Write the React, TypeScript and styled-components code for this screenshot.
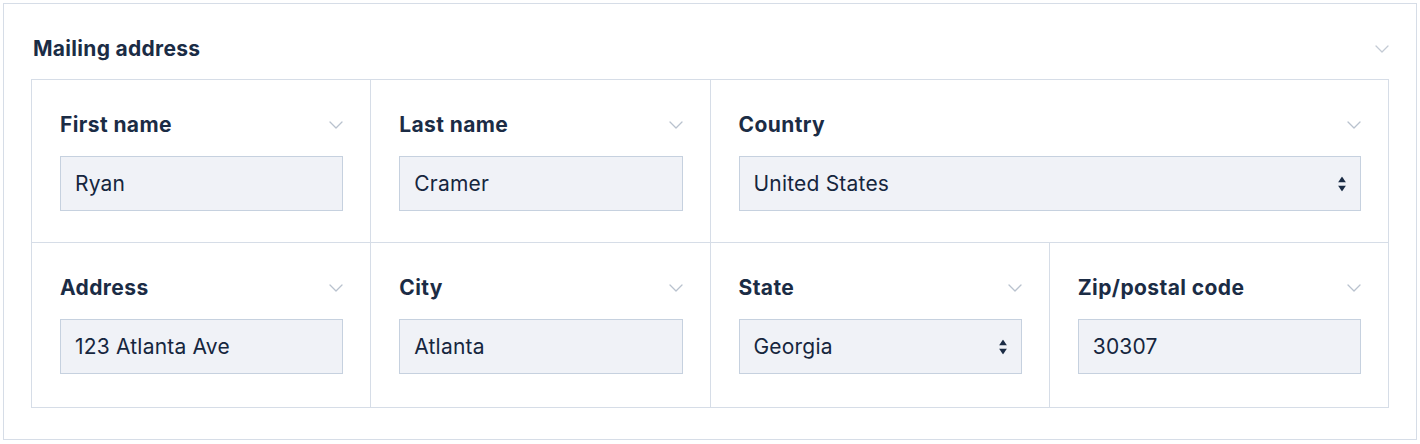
import React from "react";
import styled, { createGlobalStyle } from "styled-components";

const Global = createGlobalStyle`
  html, body { margin: 0; padding: 0; background: #ffffff; }
  body { font-family: Inter, "Noto Sans", sans-serif; -webkit-font-smoothing: antialiased; }
  * { box-sizing: border-box; }
`;

const Page = styled.div`
  padding: 3px 3px 0 3px;
  width: 1420px;
`;

const Panel = styled.section`
  border: 1px solid #d6dde7;
  padding: 33px 27px 31px 27px;
`;

const Header = styled.div`
  display: flex;
  align-items: center;
  justify-content: space-between;
  margin-bottom: 18px;
`;

const Title = styled.h2`
  margin: 0 0 0 2px;
  font-size: 21px;
  line-height: 24px;
  font-weight: 700;
  color: #1b2c45;
  letter-spacing: 0.3px;
`;

const Grid = styled.div`
  display: grid;
  grid-template-columns: repeat(4, 1fr);
  gap: 1px;
  background: #d6dde7;
  border: 1px solid #d6dde7;
`;

const Cell = styled.div<{ $span?: number; $last?: boolean }>`
  grid-column: span ${(p) => p.$span ?? 1};
  background: #ffffff;
  padding: 32px 27px ${(p) => (p.$last ? 33 : 31)}px 28px;
  display: flex;
  flex-direction: column;
  gap: 18px;
`;

const LabelRow = styled.div`
  display: flex;
  align-items: center;
  justify-content: space-between;
  height: 26px;
`;

const Label = styled.label`
  font-size: 21px;
  line-height: 26px;
  font-weight: 700;
  color: #1b2c45;
  letter-spacing: 0.4px;
`;

const Field = styled.div`
  position: relative;
  height: 55px;
  background: #f0f2f7;
  border: 1px solid #c6d1df;
  display: flex;
  align-items: center;
  padding: 0 14px;
  font-size: 21px;
  color: #16263e;
  letter-spacing: 0.2px;
`;

const Arrows = styled.span`
  position: absolute;
  right: 14px;
  top: 50%;
  transform: translateY(-50%);
  display: flex;
  flex-direction: column;
  gap: 3px;
`;

const Chevron = ({ color = "#b9c2ce" }: { color?: string }) => (
  <svg width="14" height="8" viewBox="0 0 14 8" fill="none">
    <path d="M1 1l6 6 6-6" stroke={color} strokeWidth="1.3" strokeLinecap="round" strokeLinejoin="round" />
  </svg>
);

const UpDown = () => (
  <Arrows>
    <svg width="8" height="6" viewBox="0 0 8 6"><path d="M4 0L8 6H0z" fill="#1b2c45" /></svg>
    <svg width="8" height="6" viewBox="0 0 8 6"><path d="M0 0h8L4 6z" fill="#1b2c45" /></svg>
  </Arrows>
);

type F = { label: string; value: string; select?: boolean; span?: number; last?: boolean };

const fields: F[] = [
  { label: "First name", value: "Ryan" },
  { label: "Last name", value: "Cramer" },
  { label: "Country", value: "United States", select: true, span: 2 },
  { label: "Address", value: "123 Atlanta Ave", last: true },
  { label: "City", value: "Atlanta", last: true },
  { label: "State", value: "Georgia", select: true, last: true },
  { label: "Zip/postal code", value: "30307", last: true },
];

export default function App() {
  return (
    <Page>
      <Global />
      <Panel>
        <Header>
          <Title>Mailing address</Title>
          <Chevron color="#c3cad4" />
        </Header>
        <Grid>
          {fields.map((f) => (
            <Cell key={f.label} $span={f.span} $last={f.last}>
              <LabelRow>
                <Label>{f.label}</Label>
                <Chevron />
              </LabelRow>
              <Field>
                {f.value}
                {f.select && <UpDown />}
              </Field>
            </Cell>
          ))}
        </Grid>
      </Panel>
    </Page>
  );
}
